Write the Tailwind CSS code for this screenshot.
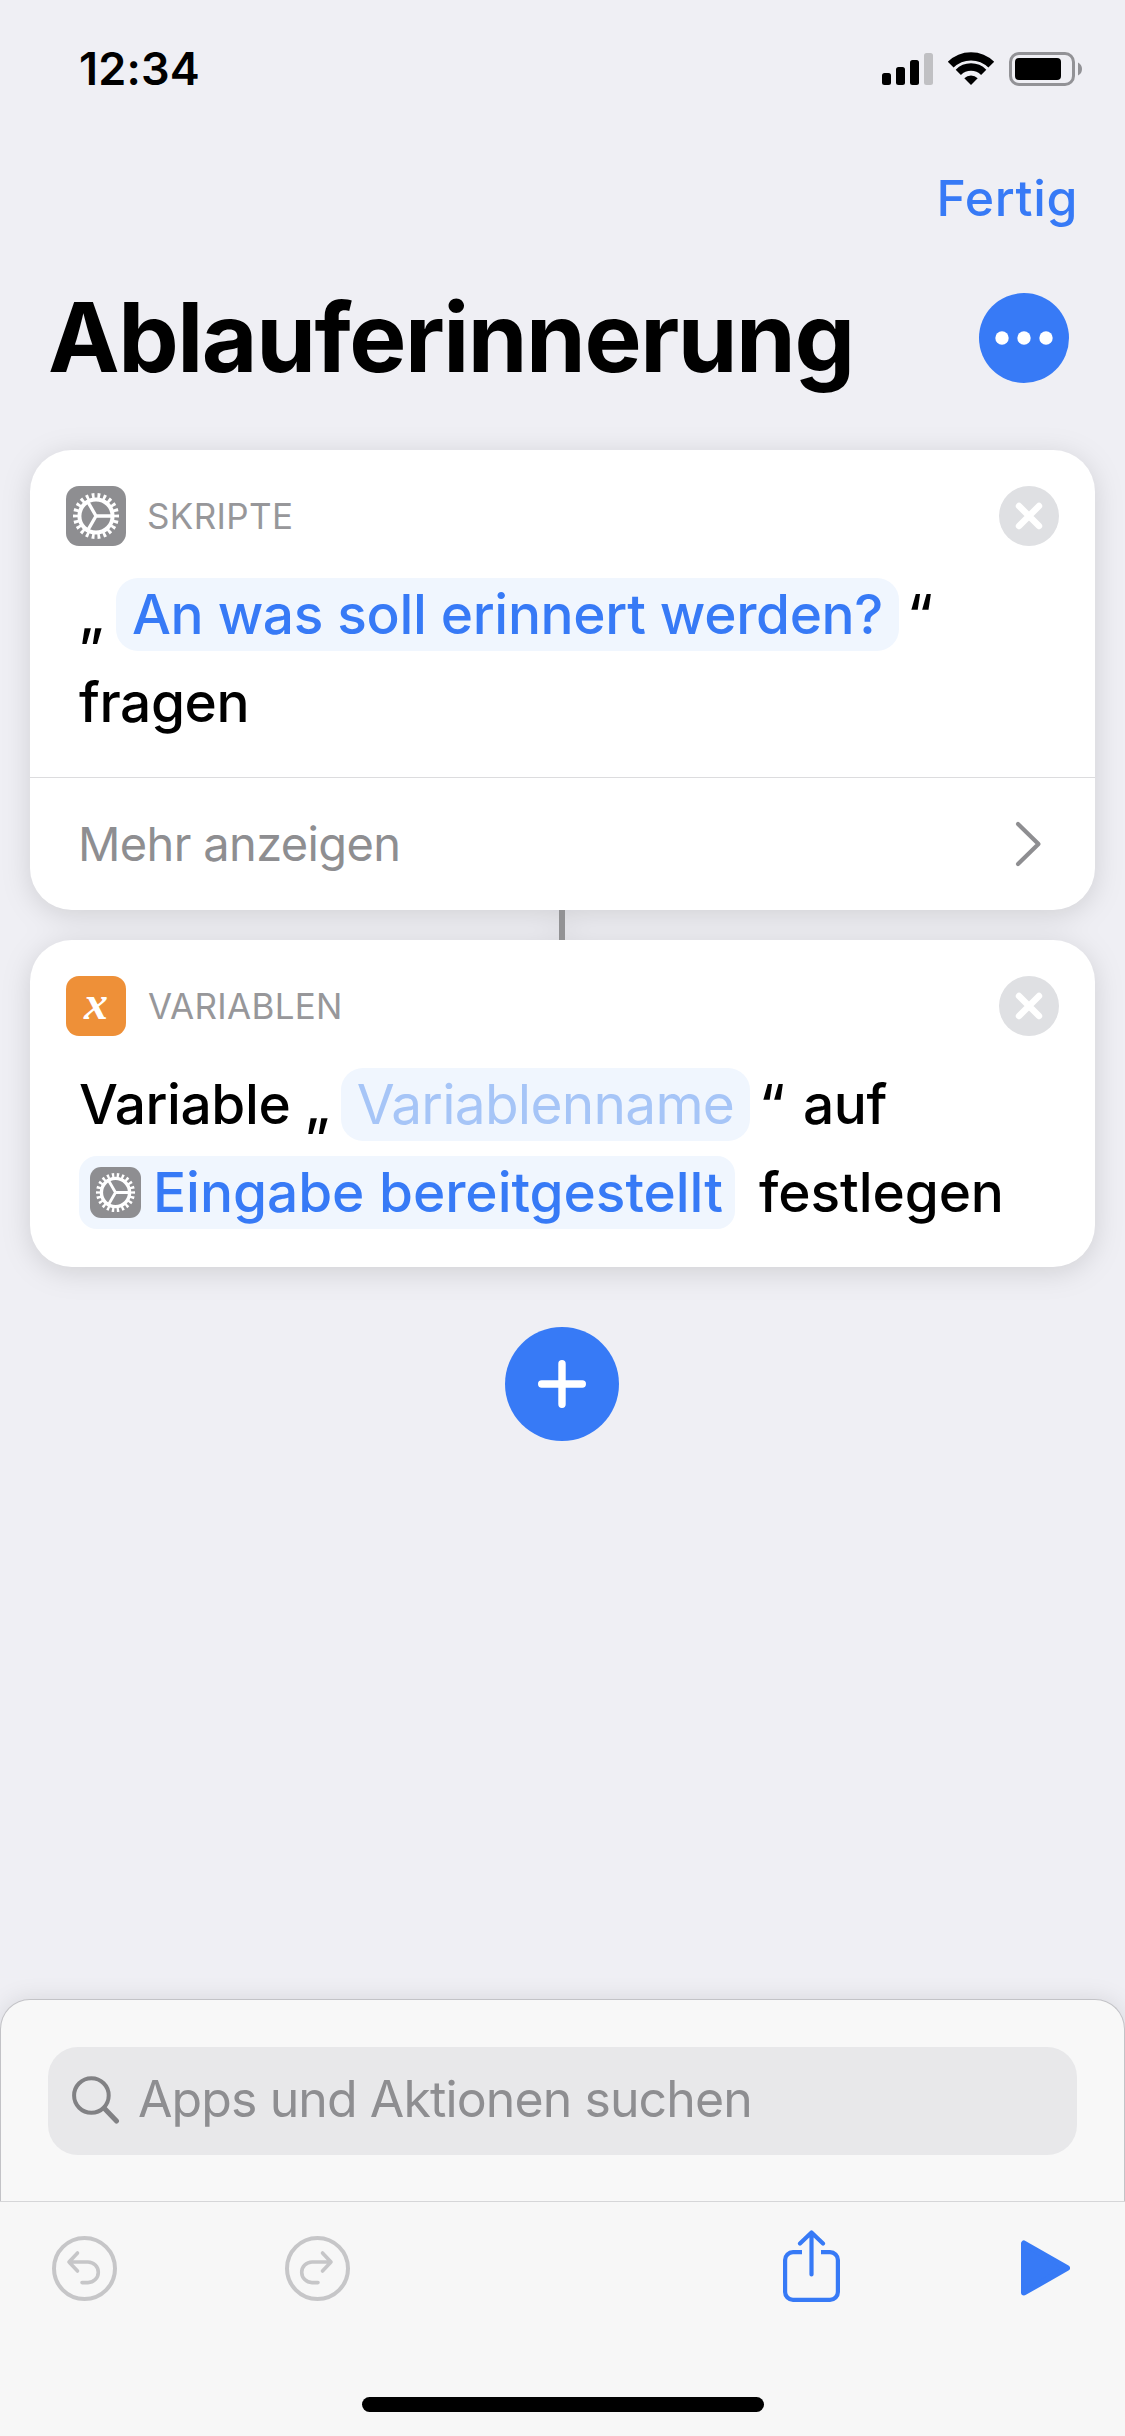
<!DOCTYPE html>
<html lang="de">
<head>
  <meta charset="UTF-8" />
  <meta name="viewport" content="width=device-width, initial-scale=1" />
  <title>Ablauferinnerung</title>
  <script src="https://cdn.jsdelivr.net/npm/@tailwindcss/browser@4"></script>
</head>

<body class="bg-[#efeff4] text-black font-['Inter',sans-serif]">
  <!-- shared symbols -->
  <svg class="hidden">
    <symbol id="gear" viewBox="0 0 60 60">
      <rect width="60" height="60" rx="13" fill="#8e8e91" />
      <g fill="none" stroke="#fff">
        <circle cx="30" cy="30" r="16.6" stroke-width="4" />
        <circle cx="30" cy="30" r="20.4" stroke-width="5.2" pathLength="220"
                stroke-dasharray="4.8 5.2" stroke-dashoffset="2.4" />
        <path d="M30 30H46M30 30L22 16.1M30 30L22 43.9" stroke-width="3.3" />
      </g>
    </symbol>
    <symbol id="close" viewBox="0 0 60 60">
      <circle cx="30" cy="30" r="30" fill="#dfe0e3" />
      <path d="M20 20L40 40M40 20L20 40" stroke="#fff" stroke-width="6.4" stroke-linecap="round" />
    </symbol>
  </svg>

  <div class="flex h-[2436px] w-[1125px] flex-col overflow-hidden">
    <!-- Status bar -->
    <div class="flex h-[138px] shrink-0 items-center justify-between pl-[79px] pr-[43px]">
      <span class="text-[45px] font-semibold tracking-[0.2px]">12:34</span>
      <svg class="h-9 w-[200px]" viewBox="0 0 200 36">
        <rect x="0" y="22" width="9" height="12" rx="2.5" />
        <rect x="14" y="16" width="9" height="18" rx="2.5" />
        <rect x="28" y="9" width="9" height="25" rx="2.5" />
        <rect x="42" y="2" width="9" height="32" rx="2.5" fill="#c0c0c3" />
        <g fill="none" stroke="#000">
          <path d="M68.7 13.7A28.7 28.7 0 0 1 109.3 13.7" stroke-width="8.2" />
          <path d="M76.3 21.3A18 18 0 0 1 101.7 21.3" stroke-width="7.4" />
        </g>
        <path d="M89 34L82.3 27.3A9.6 9.6 0 0 1 95.7 27.3Z" />
        <rect x="128.5" y="2.5" width="63" height="31" rx="8.5" fill="none" stroke="#929296" stroke-width="3" />
        <rect x="133" y="7" width="46" height="22" rx="4" />
        <path d="M196 11.5Q200 13.5 200 18T196 24.5Z" fill="#929296" />
      </svg>
    </div>

    <!-- Nav -->
    <header class="shrink-0">
      <div class="flex h-[120px] items-center justify-end pr-[47px]">
        <a href="#" class="text-[50px] font-medium tracking-[0.6px] text-[#377af6]">Fertig</a>
      </div>
      <div class="flex h-40 items-center justify-between pl-[48px] pr-[56px]">
        <h1 class="-mt-0.5 text-[96px] leading-none font-bold tracking-[-1.45px]">Ablauferinnerung</h1>
        <button>
          <svg class="size-[90px]" viewBox="0 0 90 90">
            <circle cx="45" cy="45" r="45" fill="#377af6" />
            <g fill="#fff">
              <circle cx="23" cy="45" r="6.7" />
              <circle cx="45" cy="45" r="6.7" />
              <circle cx="67" cy="45" r="6.7" />
            </g>
          </svg>
        </button>
      </div>
    </header>

    <!-- Actions -->
    <main class="mt-8 flex shrink-0 flex-col items-center">
      <div class="flex w-[1065px] flex-col items-center drop-shadow-[0_5px_14px_rgba(0,0,0,0.13)]">
        <section class="w-full rounded-[42px] bg-white">
          <div class="flex items-center pt-9 pl-9 pr-9">
            <svg class="size-[60px]"><use href="#gear" /></svg>
            <span class="ml-[21px] text-[35px] tracking-[0.36px] text-[#97979a]">SKRIPTE</span>
            <svg class="ml-auto size-[60px]"><use href="#close" /></svg>
          </div>
          <div class="mt-[24px] pb-[31px] pl-[49px] text-[55px] font-medium tracking-[-0.4px]">
            <p class="flex h-22 items-center">
              <span class="w-[37px]">„</span>
              <span class="flex h-[73px] w-[783px] items-center justify-center rounded-[22px] bg-[#f0f6fe] text-[#377af6] tracking-[-0.35px]">An was soll erinnert werden?</span>
              <span class="ml-2">“</span>
            </p>
            <p class="flex h-22 items-center">fragen</p>
          </div>
          <div class="flex h-[133px] items-center justify-between border-t border-[#dcdcde] pl-[48px] pr-[53px]">
            <span class="text-[47px] tracking-[-0.65px] text-[#8e8e91]">Mehr anzeigen</span>
            <svg class="h-[46px] w-[27px]" viewBox="0 0 27 46" fill="none" stroke="#8e8e91" stroke-width="4.2"
                 stroke-linecap="round" stroke-linejoin="round">
              <path d="M3 3L23.5 23L3 43" />
            </svg>
          </div>
        </section>

        <div class="mr-px h-[30px] w-1.5 bg-[#929294]"></div>

        <section class="w-full rounded-[42px] bg-white">
          <div class="flex items-center pt-9 pl-9 pr-9">
            <span class="flex size-[60px] items-center justify-center rounded-[13px] bg-[#ee9038] pb-1.5 font-['Liberation_Serif',serif] text-[48px] leading-none font-bold text-white italic">x</span>
            <span class="ml-[22px] text-[35px] tracking-[0.3px] text-[#97979a]">VARIABLEN</span>
            <svg class="ml-auto size-[60px]"><use href="#close" /></svg>
          </div>
          <div class="mt-[24px] pb-[31px] pl-[49px] text-[55px] font-medium tracking-[-0.4px]">
            <p class="flex h-22 items-center">
              <span class="w-[226px]">Variable</span>
              <span class="w-9">„</span>
              <span class="flex h-[73px] w-[409px] items-center justify-center rounded-[22px] bg-[#f0f6fe] font-normal tracking-[-0.74px] text-[#a6c5f7]">Variablenname</span>
              <span class="ml-[9px] w-11">“</span>
              <span>auf</span>
            </p>
            <p class="flex h-22 items-center">
              <span class="flex h-[73px] w-[656px] items-center rounded-[18px] bg-[#f0f6fe] pl-[11px] tracking-[-0.05px] text-[#377af6]">
                <svg class="size-[51px]"><use href="#gear" /></svg>
                <span class="ml-3">Eingabe bereitgestellt</span>
              </span>
              <span class="ml-6 tracking-[-0.1px]">festlegen</span>
            </p>
          </div>
        </section>
      </div>

      <button class="mt-[60px] mr-px">
        <svg class="size-[114px]" viewBox="0 0 114 114">
          <circle cx="57" cy="57" r="57" fill="#377af6" />
          <path d="M36.7 57H77.3M57 36.7V77.3" stroke="#fff" stroke-width="7.4" stroke-linecap="round" />
        </svg>
      </button>
    </main>

    <!-- Search sheet + toolbar -->
    <footer class="mt-auto shrink-0 bg-[#efeff4]">
      <div class="h-[202px] rounded-t-[30px] border border-b-0 border-[#c3c3c7] bg-[#f8f8f8] px-[47px] pt-[47px] shadow-[0_0_24px_rgba(0,0,0,0.1)]">
        <div class="flex h-[108px] items-center rounded-[30px] bg-[#e8e8ea] pb-0.5 pl-6">
          <svg class="h-12 w-12" viewBox="0 0 48 48" fill="none" stroke="#818184" stroke-linecap="round">
            <circle cx="19.4" cy="19.5" r="17.3" stroke-width="4" />
            <path d="M32.5 32.5L44.5 45" stroke-width="5" />
          </svg>
          <span class="-mt-0.5 ml-[18px] text-[50px] tracking-[-0.9px] text-[#8e8e91]">Apps und Aktionen suchen</span>
        </div>
      </div>

      <div class="relative flex h-[235px] flex-col items-center border-t border-[#d6d6d8] bg-[#f7f7f7]">
        <div class="mt-7 flex h-[72px] w-full items-center pl-[52px] pr-[55px]">
          <svg class="mt-1 size-[65px]" viewBox="0 0 65 65" fill="none" stroke="#c6c6c8" stroke-width="4"
               stroke-linecap="round" stroke-linejoin="round">
            <circle cx="32.5" cy="32.5" r="30.5" />
            <path d="M25.5 17L17 26L25.5 35M17 26H36A10.3 10.3 0 0 1 36 46.6H30" stroke-width="3.6" />
          </svg>
          <svg class="mt-1 ml-[168px] size-[65px]" viewBox="0 0 65 65" fill="none" stroke="#c6c6c8" stroke-width="4"
               stroke-linecap="round" stroke-linejoin="round">
            <circle cx="32.5" cy="32.5" r="30.5" />
            <path d="M37.5 17L46 26L37.5 35M46 26H27A10.3 10.3 0 0 0 27 46.6H33" stroke-width="3.6" />
          </svg>
          <svg class="ml-auto h-[72px] w-[57px]" viewBox="0 0 57 72" fill="none" stroke="#377af6" stroke-width="4.2">
            <path d="M19 22.1H10A7.9 7.9 0 0 0 2.1 30V62A7.9 7.9 0 0 0 10 69.9H47A7.9 7.9 0 0 0 54.9 62V30A7.9 7.9 0 0 0 47 22.1H38" />
            <path d="M17 13.5L28.5 2.4L40 13.5M28.5 3V44.5" stroke-linecap="round" stroke-linejoin="round" />
          </svg>
          <svg class="mt-[3px] ml-[181px] h-[56px] w-[49px]" viewBox="0 0 49 56" fill="#377af6" stroke="#377af6"
               stroke-width="6" stroke-linejoin="round">
            <path d="M3 3.5V52.5L46 28Z" />
          </svg>
        </div>
        <div class="mt-[95px] h-[15px] w-[402px] rounded-full bg-black"></div>
      </div>
    </footer>
  </div>
</body>
</html>
